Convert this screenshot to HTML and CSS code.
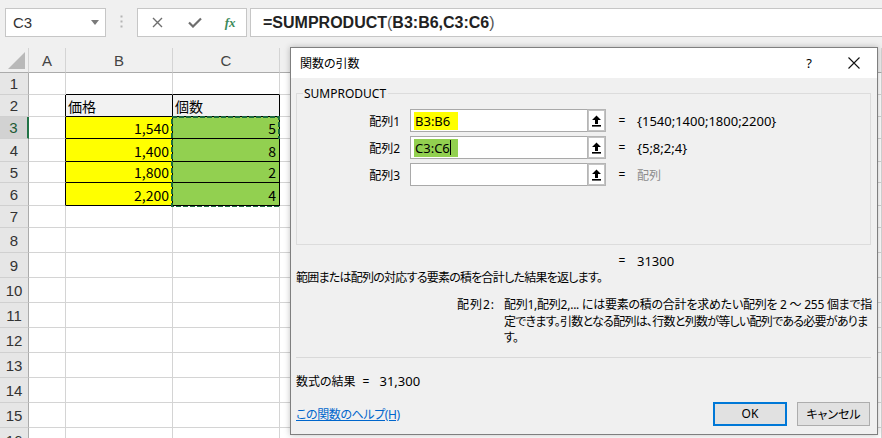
FILE: index.html
```html
<!DOCTYPE html>
<html>
<head>
  <title>関数の引数</title>
  <link rel="stylesheet" href="styles.css">
</head>
<body>
  <div class="toolbar">
    <div class="name-box"><span>C3</span><span class="caret"></span></div>
    <div class="grip">
      <svg width="3" height="14" viewBox="0 0 3 14"><rect x="0.5" y="0.5" width="2" height="2" fill="#b4b4b4"/><rect x="0.5" y="5.5" width="2" height="2" fill="#b4b4b4"/><rect x="0.5" y="10.5" width="2" height="2" fill="#b4b4b4"/></svg>
    </div>
    <div class="fbuttons">
      <span class="fbtn cancel"><svg width="11" height="11" viewBox="0 0 11 11"><path d="M1 1L10 10M10 1L1 10" stroke="#6e6e6e" stroke-width="1.4"/></svg></span>
      <span class="fbtn enter"><svg width="14" height="11" viewBox="0 0 14 11"><path d="M1 5.5L5 9.5L13 1.5" fill="none" stroke="#6e6e6e" stroke-width="2.2"/></svg></span>
      <span class="fbtn fx">fx</span>
    </div>
    <div class="formula">=SUMPRODUCT<span class="paren">(</span>B3:B6,C3:C6<span class="paren">)</span></div>
  </div>

  <div class="sheet">
    <div class="row head">
      <div class="corner"><svg width="17" height="17" viewBox="0 0 17 17"><path d="M17 0V17H0Z" fill="#b9b9b9"/></svg></div>
      <div class="colh ca">A</div>
      <div class="colh cb">B</div>
      <div class="colh cc">C</div>
      <div class="colh cd"></div>
    </div>
    <div class="row">
      <div class="rh">1</div><div class="cell ca"></div><div class="cell cb top"></div><div class="cell cc top"></div><div class="cell cd"></div>
    </div>
    <div class="row">
      <div class="rh">2</div><div class="cell ca edge"></div><div class="cell cb boxed title">価格</div><div class="cell cc boxed title">個数</div><div class="cell cd"></div>
    </div>
    <div class="row">
      <div class="rh sel">3</div><div class="cell ca edge"></div><div class="cell cb boxed yellow num">1,540</div>
      <div class="cell cc boxed green num">5
        <div class="ants"><svg width="109" height="91" viewBox="0 0 109 91"><rect x="1" y="1" width="107" height="89" fill="none" stroke="#1d6b3f" stroke-width="2" stroke-dasharray="5 2"/></svg></div>
      </div>
      <div class="cell cd"></div>
    </div>
    <div class="row r23">
      <div class="rh">4</div><div class="cell ca edge"></div><div class="cell cb boxed yellow num">1,400</div><div class="cell cc boxed green num">8</div><div class="cell cd"></div>
    </div>
    <div class="row r21">
      <div class="rh">5</div><div class="cell ca edge"></div><div class="cell cb boxed yellow num">1,800</div><div class="cell cc boxed green num">2</div><div class="cell cd"></div>
    </div>
    <div class="row r23">
      <div class="rh">6</div><div class="cell ca edge"></div><div class="cell cb boxed yellow num">2,200</div><div class="cell cc boxed green num">4</div><div class="cell cd"></div>
    </div>
    <div class="row">
      <div class="rh">7</div><div class="cell ca"></div><div class="cell cb"></div><div class="cell cc"></div><div class="cell cd"></div>
    </div>
    <div class="row tall">
      <div class="rh">8</div><div class="cell ca"></div><div class="cell cb"></div><div class="cell cc"></div><div class="cell cd"></div>
    </div>
    <div class="row tall">
      <div class="rh">9</div><div class="cell ca"></div><div class="cell cb"></div><div class="cell cc"></div><div class="cell cd"></div>
    </div>
    <div class="row tall">
      <div class="rh">10</div><div class="cell ca"></div><div class="cell cb"></div><div class="cell cc"></div><div class="cell cd"></div>
    </div>
    <div class="row tall">
      <div class="rh">11</div><div class="cell ca"></div><div class="cell cb"></div><div class="cell cc"></div><div class="cell cd"></div>
    </div>
    <div class="row tall">
      <div class="rh">12</div><div class="cell ca"></div><div class="cell cb"></div><div class="cell cc"></div><div class="cell cd"></div>
    </div>
    <div class="row tall">
      <div class="rh">13</div><div class="cell ca"></div><div class="cell cb"></div><div class="cell cc"></div><div class="cell cd"></div>
    </div>
    <div class="row tall">
      <div class="rh">14</div><div class="cell ca"></div><div class="cell cb"></div><div class="cell cc"></div><div class="cell cd"></div>
    </div>
    <div class="row tall">
      <div class="rh">15</div><div class="cell ca"></div><div class="cell cb"></div><div class="cell cc"></div><div class="cell cd"></div>
    </div>
    <div class="row tall">
      <div class="rh">16</div><div class="cell ca"></div><div class="cell cb"></div><div class="cell cc"></div><div class="cell cd"></div>
    </div>
  </div>

  <div class="dialog">
    <div class="dlg-title">
      <span class="dlg-caption">関数の引数</span>
      <span class="dlg-help">?</span>
      <span class="dlg-close"><svg width="12" height="12" viewBox="0 0 12 12"><path d="M0.5 0.5L11.5 11.5M11.5 0.5L0.5 11.5" stroke="#111" stroke-width="1.1"/></svg></span>
    </div>
    <div class="dlg-body">
      <fieldset class="args">
        <legend>SUMPRODUCT</legend>
        <div class="arg">
          <span class="arg-label">配列1</span>
          <div class="ref-input"><span class="ref ref-yellow">B3:B6</span></div>
          <span class="ref-btn"><svg width="11" height="12" viewBox="0 0 11 12"><path d="M5.5 0.5L10 5H7V9H4V5H1Z" fill="#000"/><rect x="1" y="10" width="9" height="1.6" fill="#000"/></svg></span>
          <span class="eq">=</span>
          <span class="val">{1540;1400;1800;2200}</span>
        </div>
        <div class="arg">
          <span class="arg-label">配列2</span>
          <div class="ref-input"><span class="ref ref-green">C3:C6<i class="cursor"></i></span></div>
          <span class="ref-btn"><svg width="11" height="12" viewBox="0 0 11 12"><path d="M5.5 0.5L10 5H7V9H4V5H1Z" fill="#000"/><rect x="1" y="10" width="9" height="1.6" fill="#000"/></svg></span>
          <span class="eq">=</span>
          <span class="val">{5;8;2;4}</span>
        </div>
        <div class="arg">
          <span class="arg-label">配列3</span>
          <div class="ref-input"></div>
          <span class="ref-btn"><svg width="11" height="12" viewBox="0 0 11 12"><path d="M5.5 0.5L10 5H7V9H4V5H1Z" fill="#000"/><rect x="1" y="10" width="9" height="1.6" fill="#000"/></svg></span>
          <span class="eq">=</span>
          <span class="val muted">配列</span>
        </div>
      </fieldset>

      <div class="result"><span class="eq">=</span><span class="val">31300</span></div>
      <p class="desc">範囲または配列の対応する要素の積を合計した結果を返します。</p>
      <div class="arg-help">
        <span class="arg-name">配列2:</span>
        <p class="arg-text"><span class="line1">配列1,配列2,... には要素の積の合計を求めたい配列を 2 ～ 255 個まで指</span><br><span class="line2">定できます。引数となる配列は、行数と列数が等しい配列である必要がありま</span><br><span class="line2">す。</span></p>
      </div>
      <div class="sep"></div>
      <div class="formula-result">数式の結果<span class="res-eq">=</span><span class="num">31,300</span></div>
      <div class="dlg-footer">
        <a class="help-link" href="#">この関数のヘルプ(H)</a>
        <div class="buttons">
          <button class="btn ok">OK</button>
          <button class="btn">キャンセル</button>
        </div>
      </div>
    </div>
  </div>
</body>
</html>
```

FILE: styles.css
```css
* {
  box-sizing: border-box;
  margin: 0;
  padding: 0;
}

body {
  width: 882px;
  height: 438px;
  overflow: hidden;
  position: relative;
  background-color: #fff;
  font-family: "Noto Sans", "Noto Sans CJK JP", sans-serif;
  color: #000;
}

/* formula bar */

.toolbar {
  display: flex;
  align-items: flex-start;
  height: 48px;
  padding-top: 8px;
  background-color: #f0f0f0;
}

.name-box {
  margin-left: 5px;
  width: 101px;
  height: 29px;
  display: flex;
  align-items: center;
  justify-content: space-between;
  padding: 0 6px 0 7px;
  background-color: #fff;
  border: 1px solid #c6c6c6;
  font: 15px "Liberation Sans", sans-serif;
  color: #333;
}

.caret {
  border-left: 4px solid transparent;
  border-right: 4px solid transparent;
  border-top: 5px solid #7a7a7a;
}

.grip {
  width: 31px;
  display: flex;
  justify-content: center;
  padding-top: 7px;
}

.fbuttons {
  width: 110px;
  height: 29px;
  display: flex;
  align-items: center;
  background-color: #fff;
  border: 1px solid #c6c6c6;
}

.fbtn {
  display: flex;
  justify-content: center;
  align-items: center;
}

.fbtn.cancel {
  width: 39px;
}

.fbtn.enter {
  width: 38px;
}

.fbtn.fx {
  width: 32px;
  font: italic bold 13px "Liberation Serif", serif;
  color: #3c8a5a;
}

.formula {
  flex: 1;
  margin-left: 3px;
  height: 29px;
  padding-left: 12px;
  background-color: #fff;
  border: 1px solid #c6c6c6;
  border-right: none;
  font: bold 16px/27px "Liberation Sans", sans-serif;
  color: #222;
}

.formula .paren {
  font-weight: normal;
  color: #555;
}

/* worksheet */

.sheet {
  position: relative;
}

.row {
  display: flex;
  height: 22px;
}

.row.r23 {
  height: 23px;
}

.row.r21 {
  height: 21px;
}

.row.tall {
  height: 25px;
}

.row.head {
  height: 25px;
  background-color: #f0f0f0;
}

.corner {
  width: 29px;
  display: flex;
  align-items: flex-end;
  justify-content: flex-end;
  padding: 0 3px 3px 0;
  border-right: 1px solid #d4d4d4;
  border-bottom: 1px solid #ababab;
}

.colh {
  display: flex;
  align-items: center;
  justify-content: center;
  border-right: 1px solid #d4d4d4;
  border-bottom: 1px solid #ababab;
  font: 15px "Liberation Sans", sans-serif;
  color: #444;
}

.ca {
  width: 37px;
}

.cb {
  width: 107px;
}

.cc {
  width: 107px;
}

.cd {
  flex: 1;
}

.rh {
  width: 29px;
  display: flex;
  align-items: center;
  justify-content: center;
  background-color: #e6e6e6;
  border-right: 1px solid #ababab;
  border-bottom: 1px solid #d0d0d0;
  font: 15px "Liberation Sans", sans-serif;
  color: #333;
}

.rh.sel {
  background-color: #d2d2d2;
  border-right: 2px solid #217346;
  color: #1e5a36;
}

.cell {
  display: flex;
  align-items: flex-end;
  padding: 0 3px 1px 2px;
  border-right: 1px solid #d4d4d4;
  border-bottom: 1px solid #d4d4d4;
  font: 14px/18px "Noto Sans CJK JP", sans-serif;
}

.cell.top {
  border-bottom-color: #000;
}

.cell.edge {
  border-right-color: #000;
}

.cell.boxed {
  border-right-color: #000;
  border-bottom-color: #000;
}

.cell.title {
  background-color: #f2f2f2;
}

.cell.yellow {
  background-color: #ffff00;
}

.cell.green {
  background-color: #92d050;
  position: relative;
}

.cell.num {
  justify-content: flex-end;
}

.ants {
  position: absolute;
  left: -2px;
  top: -1px;
  width: 109px;
  height: 91px;
}

.ants svg {
  display: block;
}

/* dialog */

.dialog {
  position: absolute;
  left: 290px;
  top: 47px;
  width: 588px;
  height: 388px;
  background-color: #f0f0f0;
  border: 1px solid #7f7f7f;
  box-shadow: 0 0 6px rgba(0, 0, 0, 0.25);
  font-size: 12px;
}

.dlg-title {
  height: 30px;
  display: flex;
  align-items: center;
  padding-left: 9px;
  background-color: #fff;
  font-size: 12px;
}

.dlg-caption {
  flex: 1;
  font-feature-settings: "palt";
}

.dlg-help {
  width: 20px;
  font-size: 13px;
  text-align: center;
}

.dlg-close {
  width: 46px;
  margin-left: 12px;
  display: flex;
  justify-content: center;
}

.dlg-body {
  padding: 8px 6px 0 5px;
}

.args {
  border: 1px solid #dcdcdc;
  padding: 8px 0 58px 0;
}

.args legend {
  margin-left: 6px;
  padding: 0 2px 0 1px;
  line-height: 15px;
}

.arg {
  display: flex;
  align-items: center;
  height: 23px;
  margin-bottom: 4px;
}

.arg:last-child {
  margin-bottom: 0;
}

.arg-label {
  width: 103px;
  text-align: right;
}

.ref-input {
  margin-left: 10px;
  width: 177px;
  height: 23px;
  display: flex;
  align-items: center;
  padding-left: 3px;
  background-color: #fff;
  border: 1px solid #a9a9a9;
  border-right: none;
}

.ref {
  display: flex;
  align-items: center;
  height: 18px;
  width: 44px;
  padding-left: 1px;
  font-size: 13px;
}

.ref-yellow {
  background-color: #ffff00;
}

.ref-green {
  background-color: #92d050;
}

.cursor {
  display: inline-block;
  width: 1px;
  height: 15px;
  background-color: #000;
}

.ref-btn {
  width: 19px;
  height: 23px;
  display: flex;
  align-items: center;
  justify-content: center;
  background-color: #fff;
  border: 2px solid #c4c4c4;
  outline: 1px solid #b5b5b5;
  outline-offset: -1px;
}

.eq {
  margin-left: 12px;
  width: 8px;
  text-align: center;
}

.val {
  margin-left: 11px;
  font-size: 13px;
}

.val.muted {
  font-size: 12px;
  color: #8c8c8c;
}

.result {
  display: flex;
  margin-top: 8px;
  padding-left: 310px;
  line-height: 16px;
}

.desc {
  margin-top: 1px;
  line-height: 16px;
  letter-spacing: -0.75px;
  font-feature-settings: "palt";
}

.arg-help {
  display: flex;
  margin-top: 11px;
  line-height: 16.5px;
  font-feature-settings: "palt";
}

.arg-name {
  flex-shrink: 0;
  width: 199px;
  text-align: right;
  letter-spacing: 1px;
}

.arg-text {
  margin-left: 9px;
  white-space: nowrap;
}

.arg-text .line1 {
  letter-spacing: -0.25px;
}

.arg-text .line2 {
  letter-spacing: -0.72px;
}

.sep {
  margin-top: 10px;
  height: 1px;
  background-color: #d9d9d9;
}

.formula-result {
  margin-top: 15px;
  line-height: 16px;
  font-feature-settings: "palt";
}

.res-eq {
  margin-left: 7px;
}

.formula-result .num {
  margin-left: 10px;
  font-size: 13px;
}

.dlg-footer {
  display: flex;
  align-items: center;
  justify-content: space-between;
  margin-top: 12px;
  padding-right: 1px;
}

.help-link {
  color: #0066cc;
  text-decoration: underline;
  letter-spacing: -0.4px;
  font-feature-settings: "palt";
}

.buttons {
  display: flex;
  gap: 10px;
}

.btn {
  width: 73px;
  height: 24px;
  background-color: #e1e1e1;
  border: 1px solid #adadad;
  font-family: inherit;
  font-size: 12px;
  color: #000;
  font-feature-settings: "palt";
}

.btn.ok {
  width: 74px;
  border: 2px solid #0078d7;
}
```
